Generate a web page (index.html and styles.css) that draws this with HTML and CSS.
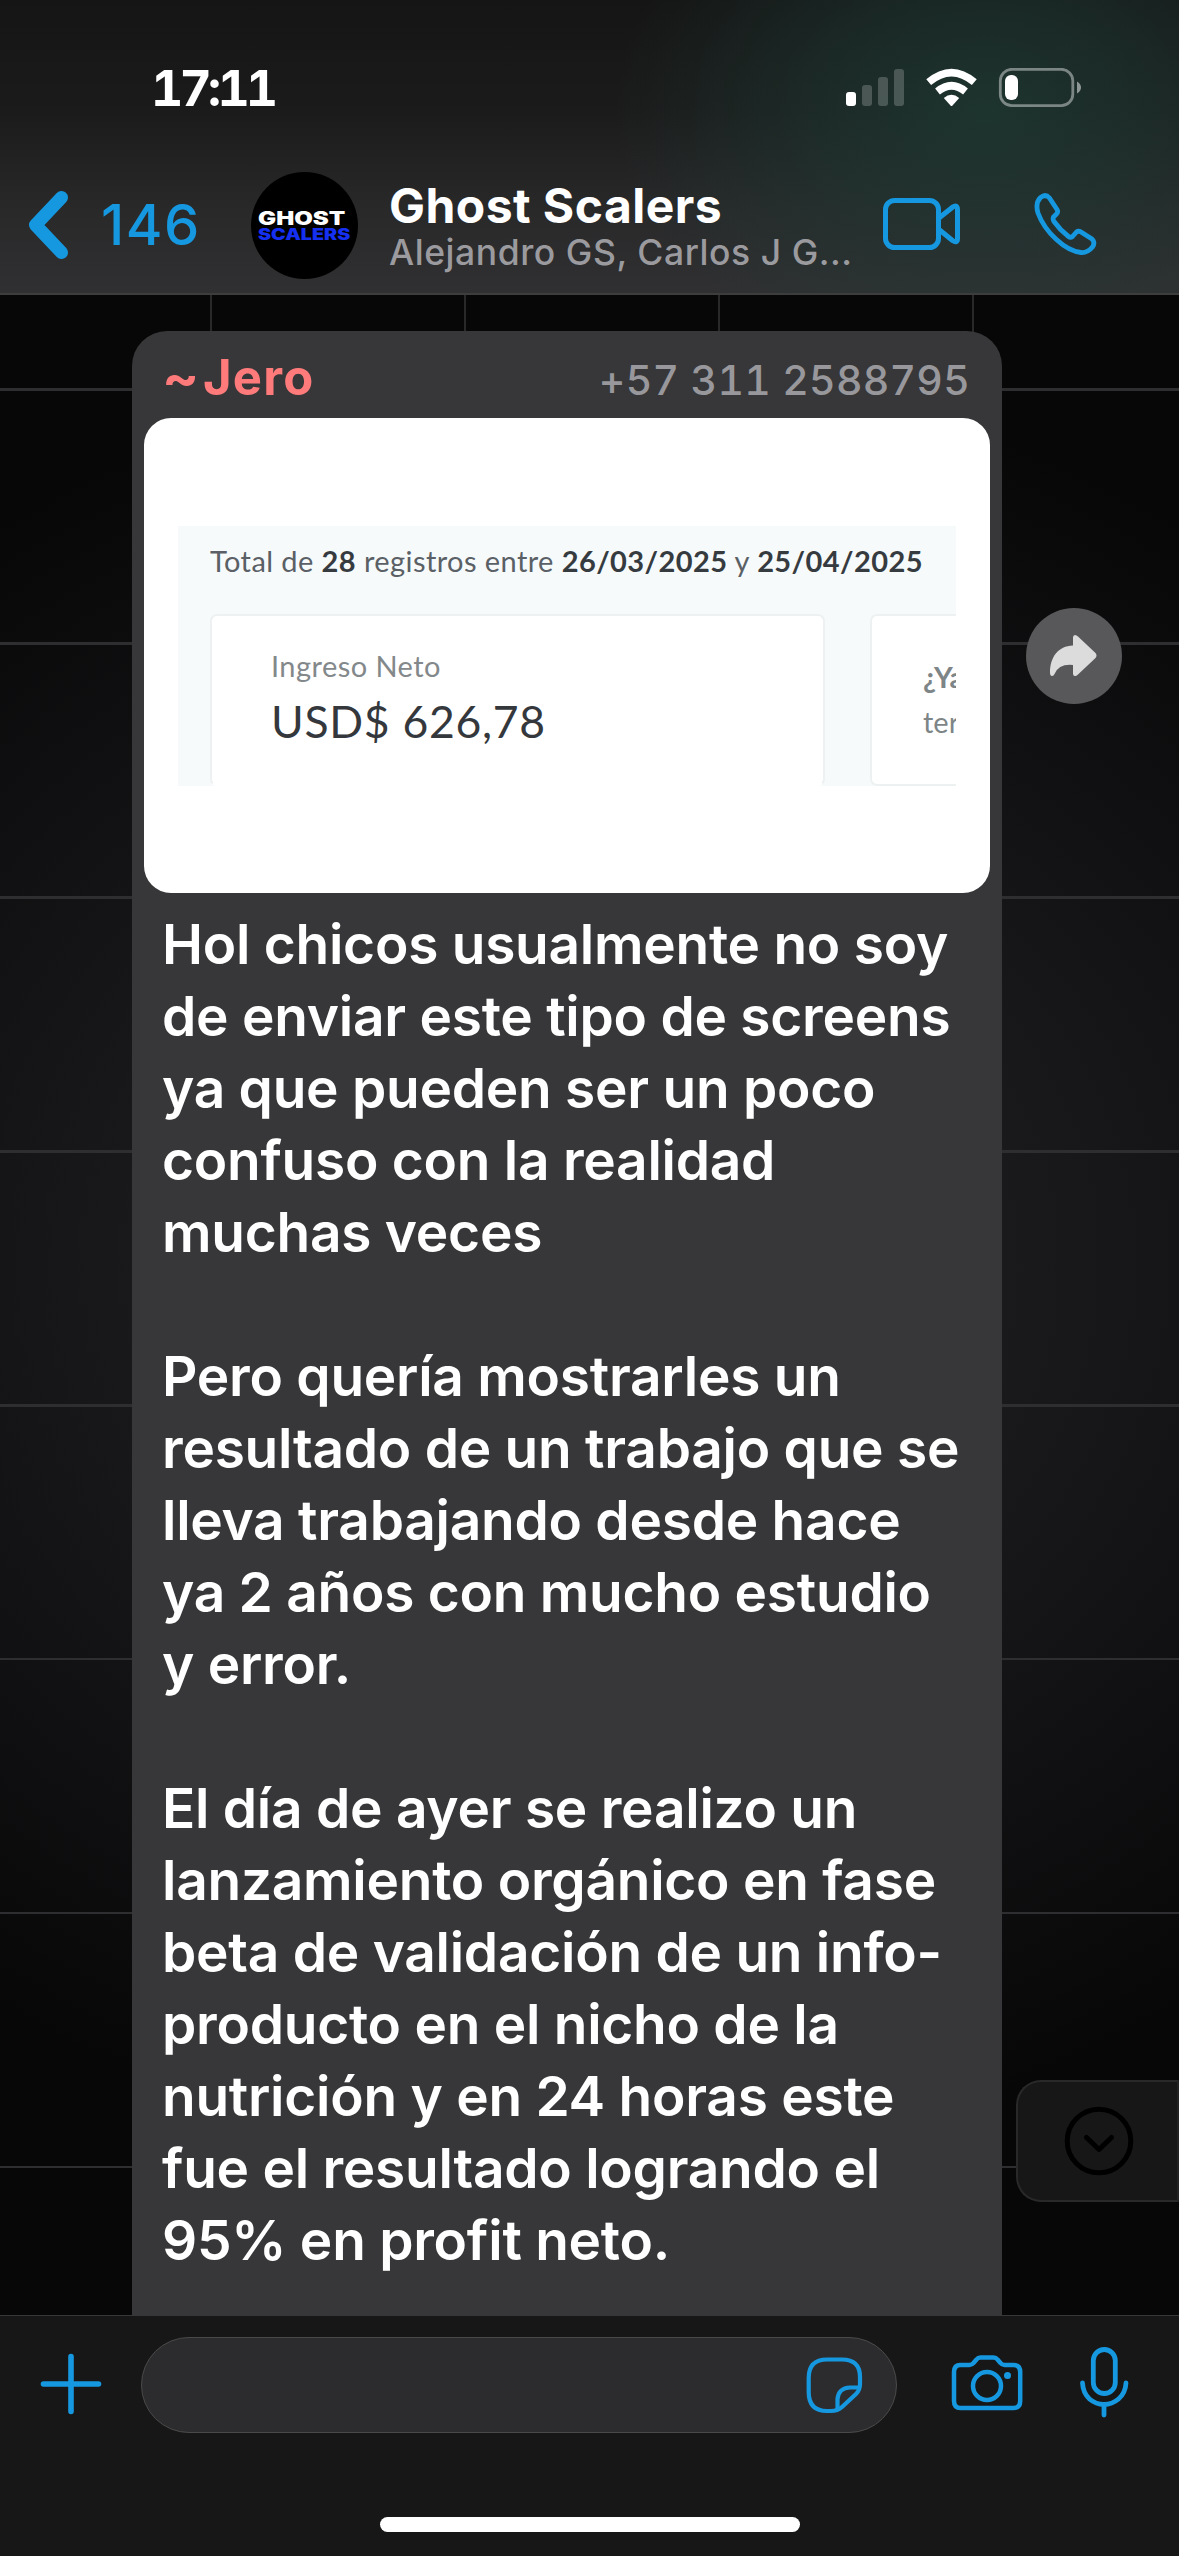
FILE: index.html
```html
<!DOCTYPE html>
<html lang="es">
<head>
<meta charset="utf-8">
<title>Ghost Scalers</title>
<link rel="stylesheet" href="styles.css">
</head>
<body>
<div class="phone">
  <header class="header">
    <div class="status">
      <span class="time">17:11</span>
      <svg class="status-icons" width="236" height="40" viewBox="846 68 236 40">
        <rect x="846" y="92" width="10" height="14" rx="3" fill="#fff"/>
        <g fill="#fff" opacity=".2">
          <rect x="862" y="85" width="10" height="21" rx="3"/>
          <rect x="878" y="77" width="10" height="29" rx="3"/>
          <rect x="894" y="69" width="10" height="37" rx="3"/>
        </g>
        <g fill="none" stroke="#fff" stroke-width="7.5">
          <path d="M928.7 82.2Q951.5 63 974.3 82.2"/>
          <path d="M937.5 91.5Q951.5 80 965.500 91.500"/>
        </g>
        <path d="M943.800 98Q951.500 91.500 959.200 98L952.500 105.500Q951.500 106.500 950.500 105.500Z" fill="#fff"/>
        <rect x="1000.300" y="69.300" width="72.500" height="36.400" rx="11.500" fill="none" stroke="#fff" stroke-opacity=".42" stroke-width="2.800"/>
        <rect x="1005" y="75" width="13" height="25" rx="6" fill="#fff"/>
        <path d="M1077 81.500Q1081 84 1081 87.500T1077 93.500Z" fill="#fff" fill-opacity=".5"/>
      </svg>
    </div>
    <div class="nav">
      <svg class="back" width="42" height="70" viewBox="0 0 42 70"><path d="M34.500 7.500L8.500 35L34.500 62.500" fill="none" stroke="#1698e0" stroke-width="13" stroke-linecap="round" stroke-linejoin="round"/></svg>
      <span class="count">146</span>
      <div class="avatar"><span class="logo-top">GHOST</span><span class="logo-bottom">SCALERS</span></div>
      <div class="titles">
        <div class="title">Ghost Scalers</div>
        <div class="subtitle">Alejandro GS, Carlos J G...</div>
      </div>
      <svg class="video" width="78" height="54" viewBox="883 196 78 54" fill="none" stroke="#1698e0" stroke-width="5" stroke-linejoin="round">
        <rect x="885.500" y="199.500" width="53" height="47" rx="9"/>
        <path d="M939 217L952.500 206.200Q957.500 203 957.500 209V237.500Q957.500 243 952.500 239.500L939 228.500"/>
      </svg>
      <svg class="call" width="64" height="64" viewBox="1033 191 64 64" fill="none" stroke="#1698e0" stroke-width="4.800" stroke-linejoin="round">
        <path d="M1040.500 196.500Q1045.500 192.500 1049.500 197L1057 208.500Q1058.500 211 1056.500 213L1053.500 216Q1052.500 218 1054 220.500Q1060 229 1068.500 235.500Q1070.500 237 1072.500 235.500L1076.500 231Q1078.500 229.500 1081 231L1092 238Q1095.500 241.500 1092.500 246Q1087.500 252 1081 251.500C1065 250 1045 231 1038 212Q1035 202 1040.500 196.500Z"/>
      </svg>
    </div>
  </header>

  <main class="chat">
    <article class="bubble">
      <div class="sender"><span class="name"><span class="tilde">~</span>Jero</span><span class="number">+57 311 2588795</span></div>
      <div class="photo">
        <div class="report">
          <p class="summary">Total de <b>28</b> registros entre <b>26/03/2025</b> y <b>25/04/2025</b></p>
          <div class="cards">
            <section class="card income">
              <div class="label">Ingreso Neto</div>
              <div class="amount">USD$ 626,78</div>
            </section>
            <section class="card promo"><b>¿Ya</b><br>ter</section>
          </div>
        </div>
      </div>
      <p class="message">Hol chicos usualmente no soy<br>de enviar este tipo de screens<br>ya que pueden ser un poco<br>confuso con la realidad<br>muchas veces<br><br>Pero quería mostrarles un<br>resultado de un trabajo que se<br>lleva trabajando desde hace<br>ya 2 años con mucho estudio<br>y error.<br><br>El día de ayer se realizo un<br>lanzamiento orgánico en fase<br>beta de validación de un info-<br>producto en el nicho de la<br>nutrición y en 24 horas este<br>fue el resultado logrando el<br>95% en profit neto.</p>
    </article>
    <div class="forward">
      <svg width="50" height="44" viewBox="1050 632 50 44"><path d="M1074 635.500Q1074 633 1076 633Q1077.500 633 1079 634.500L1096.500 651Q1098.500 653.500 1096.500 656L1079 672.500Q1077 674.500 1075.500 674Q1074 673.500 1074 671.500V663Q1060 661.500 1055.500 672Q1054.500 674.500 1052.500 674Q1051 673.500 1051 671C1051 655 1059 644 1074 643.500Z" fill="#dcdcdd"/></svg>
    </div>
    <div class="scroll-down">
      <svg width="70" height="70" viewBox="0 0 70 70" fill="none" stroke="#000" stroke-width="5"><circle cx="35" cy="35" r="31.800"/><path d="M22.500 31.500L35 43.500L47.500 31.500" stroke-linecap="round" stroke-linejoin="round"/></svg>
    </div>
  </main>

  <footer class="composer">
    <svg class="plus" width="62" height="62" viewBox="0 0 62 62"><path d="M31 3.500V58.500M3.500 31H58.500" stroke="#1698e0" stroke-width="5.600" stroke-linecap="round"/></svg>
    <div class="input">
      <svg width="58" height="58" viewBox="806 2355 58 58" fill="none" stroke="#1698e0" stroke-width="4.200" stroke-linejoin="round">
        <path d="M827 2358.500H842Q860 2358.500 860 2376V2383Q860 2389 856 2393L842 2406Q837.500 2410 831 2410H827Q808.700 2410 808.700 2391V2377Q808.700 2358.500 827 2358.500Z"/>
        <path d="M859.500 2386.500H850Q838.500 2387 837.500 2398V2408.500"/>
      </svg>
    </div>
    <svg class="camera" width="72" height="58" viewBox="951.500 2355 72 58" fill="none" stroke="#1698e0" stroke-width="4.500" stroke-linejoin="round">
      <path d="M960 2366H970Q972.500 2366 974 2364L977 2360.500Q978.500 2358.500 981 2358.500H994Q996.500 2358.500 998 2360.500L1001 2364Q1002.500 2366 1005 2366H1014Q1020.700 2366 1020.700 2373V2402Q1020.700 2409 1014 2409H961Q954.500 2409 954.500 2402V2373Q954.500 2366 961 2366Z"/>
      <circle cx="987.500" cy="2387" r="14"/>
      <circle cx="1008" cy="2376.500" r="3.500" fill="#1698e0" stroke="none"/>
    </svg>
    <svg class="mic" width="52" height="74" viewBox="1078 2345 52 74" fill="none" stroke="#1698e0" stroke-width="4.800" stroke-linecap="round">
      <rect x="1093.300" y="2349.500" width="22" height="44" rx="11"/>
      <path d="M1082.500 2383Q1083 2393 1089.500 2399Q1096 2404.500 1104 2404.500T1118.500 2399Q1125.500 2393 1126 2383M1104 2405V2415"/>
    </svg>
    <div class="home"></div>
  </footer>
</div>
</body>
</html>
```
FILE: styles.css
```css
* { box-sizing: border-box; }
body { margin: 0; background: #070707; font-family: Inter, "Liberation Sans", sans-serif; }
svg { display: block; flex: none; }
.phone { width: 1179px; height: 2556px; display: flex; flex-direction: column; overflow: hidden; }

.header {
  height: 295px;
  flex: none;
  border-bottom: 2px solid #3d3d3e;
  background:
    radial-gradient(ellipse 370px 260px at 985px 110px, rgba(30, 60, 53, .75), rgba(30, 58, 52, .5) 45%, rgba(30, 54, 50, 0)),
    linear-gradient(#151515, #1b1b1b 38%, #29292a 72%, #303032);
}
.status { height: 168px; padding: 68px 97px 0 151px; display: flex; justify-content: space-between; align-items: flex-start; }
.time { color: #fff; font-size: 50px; font-weight: 700; line-height: 40px; letter-spacing: -3.900px; font-variant-numeric: tabular-nums; }
.nav { height: 114px; padding-left: 27px; display: flex; align-items: center; color: #fff; }
.count { width: 182px; padding-left: 32px; color: #1698e0; font-size: 56px; font-weight: 500; letter-spacing: 1.500px; }
.avatar { width: 107px; height: 107px; border-radius: 50%; background: #000; padding: 38px 0 0 7px; display: flex; flex-direction: column; flex: none; font-weight: 900; white-space: nowrap; }
.logo-top { color: #fff; font-size: 18.500px; line-height: 17px; width: 62px; transform: scaleX(1.3); transform-origin: left; }
.logo-bottom { color: #1530f0; font-size: 15.500px; line-height: 16px; width: 70px; transform: scaleX(1.270); transform-origin: left; }
.titles { width: 525px; padding: 4px 0 0 31px; flex: none; white-space: nowrap; }
.title { font-size: 48px; font-weight: 700; line-height: 51px; letter-spacing: .45px; }
.subtitle { color: #9b9b9f; font-size: 35.500px; font-weight: 500; line-height: 43px; letter-spacing: .55px; }
.video { margin-top: -3px; }
.call { margin: -3px 0 0 72px; }

.chat {
  position: relative;
  flex: 1;
  min-height: 0;
  padding: 36px 0 0 132px;
  overflow: hidden;
  background:
    linear-gradient(#29292a, #29292a) 210px 0 / 2px 36px no-repeat,
    linear-gradient(#29292a, #29292a) 464px 0 / 2px 36px no-repeat,
    linear-gradient(#29292a, #29292a) 718px 0 / 2px 36px no-repeat,
    linear-gradient(#29292a, #29292a) 972px 0 / 2px 37px no-repeat,
    repeating-linear-gradient(transparent 0 93.500px, #2e2e30 93.500px 96px, transparent 96px 253.900px),
    radial-gradient(ellipse 1050px 900px at 50% 48%, #242427, #171719 50%, #070708 100%);
}
.bubble { width: 870px; height: 2000px; border-radius: 35px 35px 0 0; background: #373739; padding: 0 12px; }
.sender { height: 87px; padding: 16px 20px 0; display: flex; justify-content: space-between; white-space: nowrap; }
.name { color: #ff7b7b; font-size: 49px; font-weight: 700; line-height: 62px; letter-spacing: 1.200px; }
.tilde { display: inline-block; width: 41px; margin-left: -2px; transform: scaleX(1.120); transform-origin: left; letter-spacing: 0; }
.number { color: #98989c; font-size: 41px; font-weight: 500; line-height: 67px; letter-spacing: .25px; font-variant-numeric: tabular-nums; }
.photo { width: 846px; height: 475px; border-radius: 27px; background: #fff; padding: 108px 34px 0; }
.report { width: 778px; height: 260px; overflow: hidden; background: #f6fafb; font-family: Lato, sans-serif; color: #5a6065; }
.summary { margin: 0; padding: 15px 0 0 32px; height: 88px; font-size: 29px; line-height: 40px; letter-spacing: .42px; white-space: nowrap; }
.summary b { color: #363b40; }
.cards { display: flex; gap: 45px; padding-left: 32px; }
.card { height: 172px; flex: none; background: #fff; border: 2px solid #edf1f2; border-radius: 7px; }
.income { width: 615px; padding: 28px 59px; border-bottom-color: #fff; }
.label { color: #83888a; font-size: 29px; line-height: 44px; letter-spacing: .45px; }
.amount { color: #34383c; font-size: 44.500px; line-height: 65px; letter-spacing: .7px; white-space: nowrap; }
.promo { width: 200px; padding: 38px 0 0 51px; font-size: 29px; line-height: 45px; color: #7d8587; }
.message { margin: 0; padding: 15px 0 0 18px; color: #fff; font-size: 55px; font-weight: 600; line-height: 72px; letter-spacing: -.25px; white-space: nowrap; }
.forward { position: absolute; left: 1026px; top: 313px; width: 96px; height: 96px; border-radius: 50%; background: #58585a; display: flex; align-items: center; justify-content: center; }
.scroll-down { position: absolute; left: 1016px; top: 1785px; width: 163px; height: 122px; border: 2px solid #29292a; border-right-color: #222; border-radius: 25px 0 0 25px; background: #171717; display: flex; align-items: center; padding-left: 46px; }

.composer { position: relative; height: 241px; flex: none; background: #171717; border-top: 1px solid #373738; padding: 21px 49px 0 40px; display: flex; align-items: flex-start; }
.plus { margin-top: 16px; }
.input { width: 756px; height: 96px; margin-left: 39px; border: 1.500px solid #4a4a4b; border-radius: 49px; background: #2c2c2e; display: flex; align-items: center; justify-content: flex-end; padding-right: 32px; }
.camera { margin: 17px 0 0 54px; }
.mic { margin: 8px 0 0 55px; }
.home { position: absolute; left: 380px; top: 201px; width: 420px; height: 15px; border-radius: 8px; background: #fff; }
```
